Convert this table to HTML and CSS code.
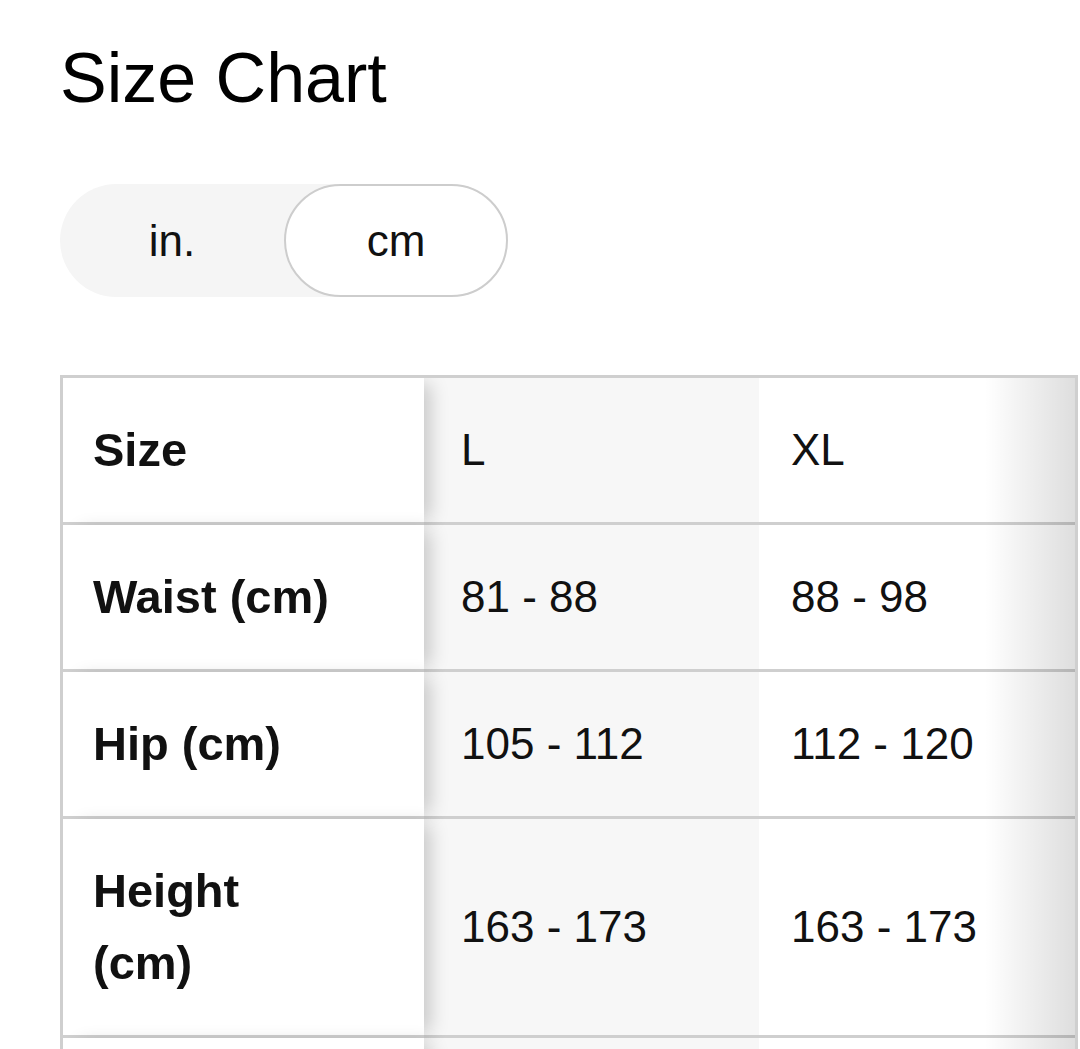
FILE: index.html
```html
<!DOCTYPE html>
<html lang="en">
<head>
  <meta charset="UTF-8">
  <meta name="viewport" content="width=device-width, initial-scale=1.0">
  <title>Size Chart</title>
  <link rel="stylesheet" href="styles.css">
</head>
<body>
  <main class="size-chart">
    <h1 class="title">Size Chart</h1>

    <div class="unit-toggle">
      <button class="unit">in.</button>
      <button class="unit active">cm</button>
    </div>

    <div class="table-wrap">
      <table class="chart">
        <colgroup>
          <col class="c-label">
          <col class="c-size">
          <col class="c-size">
        </colgroup>
        <tr>
          <th class="label">Size</th>
          <td class="current">L</td>
          <td>XL</td>
        </tr>
        <tr>
          <th class="label">Waist (cm)</th>
          <td class="current">81 - 88</td>
          <td>88 - 98</td>
        </tr>
        <tr>
          <th class="label">Hip (cm)</th>
          <td class="current">105 - 112</td>
          <td>112 - 120</td>
        </tr>
        <tr>
          <th class="label">Height (cm)</th>
          <td class="current">163 - 173</td>
          <td>163 - 173</td>
        </tr>
        <tr class="filler">
          <th class="label"></th>
          <td class="current"></td>
          <td></td>
        </tr>
      </table>
    </div>
  </main>
</body>
</html>
```

FILE: styles.css
```css
* {
  box-sizing: border-box;
}
body {
  margin: 0;
  font-family: "Liberation Sans", Arial, sans-serif;
  color: #111;
  background: #fff;
}
.size-chart {
  padding: 43px 0 0 60px;
}
.title {
  margin: 0;
  font-size: 70px;
  font-weight: 400;
  line-height: 70px;
  color: #000;
}

/* unit switch */
.unit-toggle {
  display: flex;
  width: 448px;
  height: 113px;
  margin-top: 71px;
  background: #f5f5f5;
  border-radius: 57px;
}
.unit {
  flex: 1;
  padding: 0;
  border: 2px solid transparent;
  border-radius: 57px;
  background: none;
  font-family: inherit;
  font-size: 44px;
  color: #111;
  cursor: pointer;
}
.unit.active {
  background: #fff;
  border-color: #cdcdcd;
}

/* table */
.table-wrap {
  position: relative;
  width: 1018px;
  margin-top: 78px;
  border: 3px solid #cfcfcf;
  border-bottom: 0;
  overflow: hidden;
}
.table-wrap::after {
  content: "";
  position: absolute;
  top: 0;
  right: 0;
  bottom: 0;
  width: 90px;
  background: linear-gradient(to right, rgba(0, 0, 0, 0), rgba(0, 0, 0, 0.13));
  pointer-events: none;
}
.chart {
  width: 1031px;
  table-layout: fixed;
  border-collapse: separate;
  border-spacing: 0;
}
.c-label {
  width: 361px;
}
.c-size {
  width: 335px;
}
.chart th,
.chart td {
  padding: 36px 32px;
  border-bottom: 3px solid #cfcfcf;
  text-align: left;
  vertical-align: middle;
  font-size: 44px;
  font-weight: 400;
  line-height: 72px;
}
.chart td.current {
  padding-left: 37px;
  background: #f7f7f7;
}
.chart .label {
  position: sticky;
  left: 0;
  z-index: 1;
  padding: 36px 86px 36px 30px;
  background: #fff;
  font-size: 47px;
  font-weight: 700;
  box-shadow: 12px 0 18px -6px rgba(0, 0, 0, 0.2);
}
.chart .filler th,
.chart .filler td {
  height: 144px;
}
```
